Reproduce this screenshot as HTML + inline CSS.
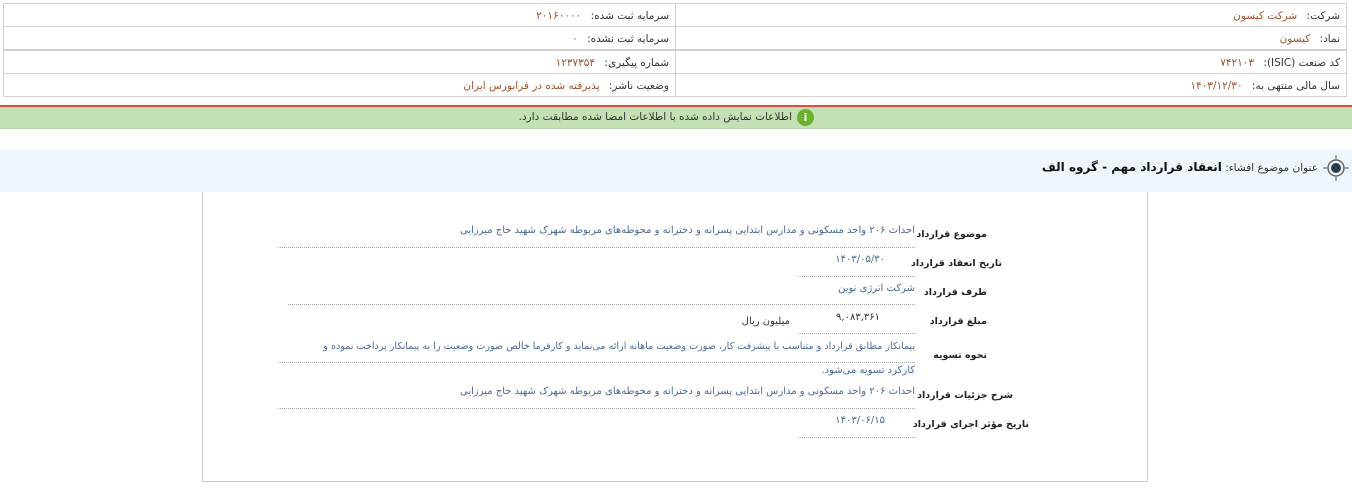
<!DOCTYPE html>
<html><head><meta charset="utf-8"><style>
*{margin:0;padding:0;box-sizing:border-box}
body{width:1352px;height:496px;background:#fff;font-family:"DejaVu Sans",sans-serif;font-size:10px;color:#333;position:relative;overflow:hidden}
.a{position:absolute;white-space:nowrap}
.cell{position:absolute;border:1px solid #d0d0d0;height:24px;direction:rtl;padding:6px 6px 0 0;font-size:10.5px;color:#333;white-space:nowrap}
.cell span{color:#a0522d;margin-right:6px}
.lab{position:absolute;direction:rtl;font-weight:bold;font-size:9.5px;color:#222;white-space:nowrap}
.val{position:absolute;direction:rtl;color:#4a6a95;font-size:10px;white-space:nowrap}
.dot{position:absolute;border-top:1px dotted #aaa;height:0}
</style></head><body>
<div class="cell" style="left:675px;top:3px;width:672px">شرکت: <span>شرکت کیسون</span></div>
<div class="cell" style="left:675px;top:26px;width:672px">نماد: <span>کیسون</span></div>
<div class="cell" style="left:675px;top:50px;width:672px">کد صنعت (ISIC): <span>۷۴۲۱۰۳</span></div>
<div class="cell" style="left:675px;top:73px;width:672px">سال مالی منتهی به: <span>۱۴۰۳/۱۲/۳۰</span></div>
<div class="cell" style="left:3px;top:3px;width:673px">سرمایه ثبت شده: <span>۲۰۱۶۰۰۰۰</span></div>
<div class="cell" style="left:3px;top:26px;width:673px">سرمایه ثبت نشده: <span>۰</span></div>
<div class="cell" style="left:3px;top:50px;width:673px">شماره پیگیری: <span>۱۲۳۷۳۵۴</span></div>
<div class="cell" style="left:3px;top:73px;width:673px">وضعیت ناشر: <span>پذیرفته شده در فرابورس ایران</span></div>
<div class="a" style="left:0;top:105px;width:1352px;height:2px;background:#e84545"></div>
<div class="a" style="left:0;top:107px;width:1352px;height:22px;background:#c3e1b4;border-bottom:1px solid #b8cfb0"></div>
<div class="a" style="right:560px;top:111px;direction:rtl;color:#333;font-size:10.5px">اطلاعات نمایش داده شده با اطلاعات امضا شده مطابقت دارد.</div>
<div class="a" style="left:797px;top:109px;width:17px;height:17px;border-radius:50%;background:#6bb12c;color:#fff;font-weight:bold;font-size:11px;text-align:center;line-height:17px">i</div>
<div class="a" style="left:0;top:150px;width:1352px;height:42px;background:#eef5fc"></div>
<svg class="a" style="left:1320px;top:153px" width="32" height="30" viewBox="0 0 32 30"><circle cx="16" cy="15" r="8" fill="none" stroke="#666" stroke-width="1.5"/><circle cx="16" cy="15" r="5" fill="#2b3a4d"/><path d="M16 2v5M16 23v5M3 15h5M24 15h5" stroke="#888" stroke-width="1.5"/></svg>
<div class="a" style="right:34px;top:160px;direction:rtl;font-size:10.5px">عنوان موضوع افشاء: <b style="font-size:12px;color:#111">انعقاد قرارداد مهم - گروه الف</b></div>
<div class="a" style="left:202px;top:192px;width:946px;height:290px;border:1px solid #ccc;border-top:none"></div>
<div class="lab" style="right:365px;top:229px">موضوع قرارداد</div>
<div class="val" style="right:437px;top:225px">احداث ۲۰۶ واحد مسکونی و مدارس ابتدایی پسرانه و دخترانه و محوطه‌های مربوطه شهرک شهید حاج میرزایی</div>
<div class="dot" style="left:278px;top:247px;width:637px"></div>
<div class="lab" style="right:350px;top:258px">تاریخ انعقاد قرارداد</div>
<div class="val" style="right:467px;top:254px">۱۴۰۳/۰۵/۳۰</div>
<div class="dot" style="left:798px;top:276px;width:117px"></div>
<div class="lab" style="right:365px;top:287px">طرف قرارداد</div>
<div class="val" style="right:437px;top:283px">شرکت انرژی نوین</div>
<div class="dot" style="left:288px;top:304px;width:627px"></div>
<div class="lab" style="right:365px;top:316px">مبلغ قرارداد</div>
<div class="val" style="right:472px;top:312px;color:#333">۹,۰۸۳,۳۶۱</div>
<div class="val" style="right:562px;top:316px;color:#333">میلیون ریال</div>
<div class="dot" style="left:798px;top:333px;width:117px"></div>
<div class="lab" style="right:365px;top:350px">نحوه تسویه</div>
<div class="val" style="right:437px;top:341px;font-size:9.6px">پیمانکار مطابق قرارداد و متناسب با پیشرفت کار، صورت وضعیت ماهانه ارائه می‌نماید و کارفرما خالص صورت وضعیت را به پیمانکار پرداخت نموده و</div>
<div class="val" style="right:437px;top:365px">کارکرد تسویه می‌شود.</div>
<div class="dot" style="left:278px;top:362px;width:637px"></div>
<div class="lab" style="right:339px;top:390px">شرح جزئیات قرارداد</div>
<div class="val" style="right:437px;top:386px">احداث ۲۰۶ واحد مسکونی و مدارس ابتدایی پسرانه و دخترانه و محوطه‌های مربوطه شهرک شهید حاج میرزایی</div>
<div class="dot" style="left:278px;top:408px;width:637px"></div>
<div class="lab" style="right:323px;top:419px">تاریخ مؤثر اجرای قرارداد</div>
<div class="val" style="right:467px;top:415px">۱۴۰۳/۰۶/۱۵</div>
<div class="dot" style="left:798px;top:437px;width:117px"></div>
</body></html>
